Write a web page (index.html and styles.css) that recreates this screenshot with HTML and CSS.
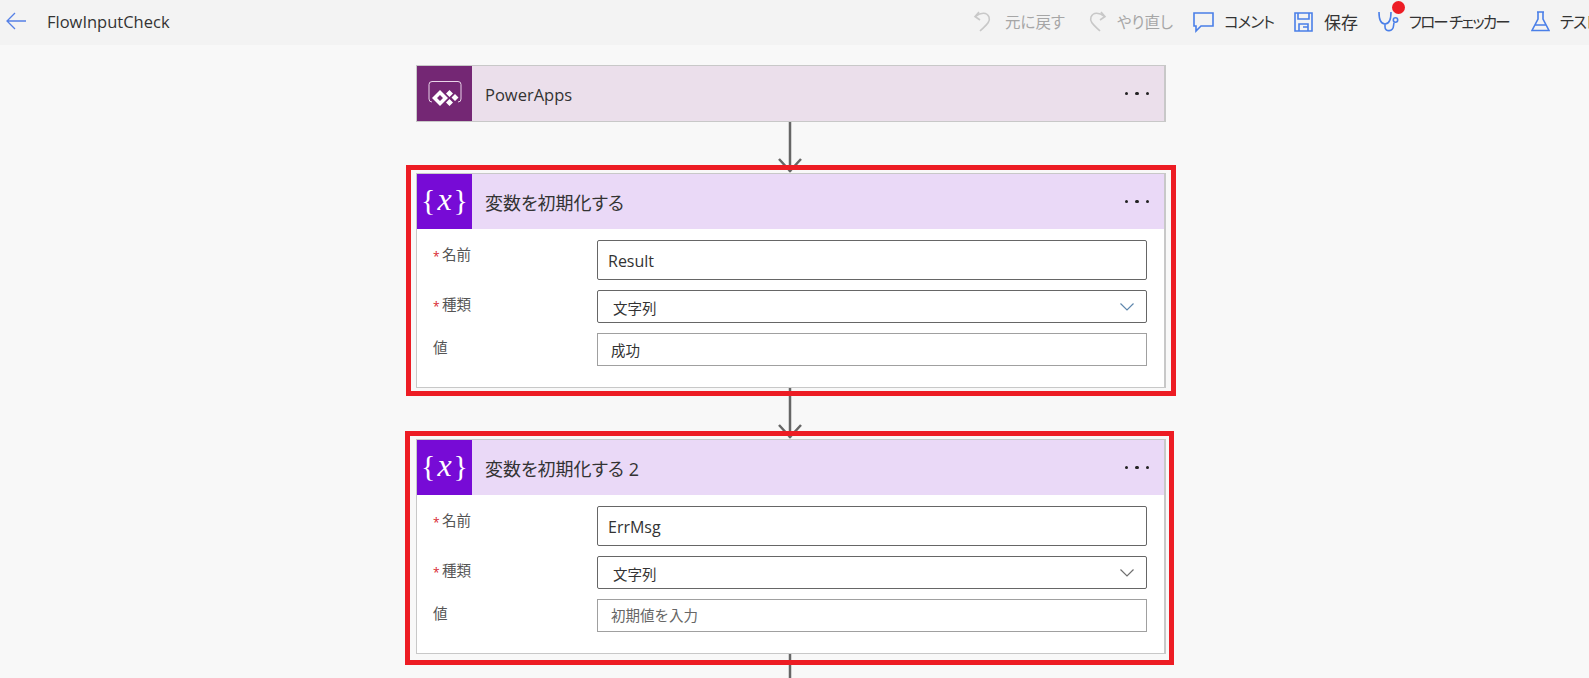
FILE: index.html
```html
<!DOCTYPE html>
<html lang="ja">
<head>
<meta charset="UTF-8" />
<title>FlowInputCheck</title>
<link rel="stylesheet" href="styles.css">
</head>
<body>
<header class="topbar">
  <svg class="back" width="20" height="18" viewBox="0 0 20 18"><path d="M9 1 1 9l8 8M1 9h19"/></svg>
  <span class="flow-name">FlowInputCheck</span>
  <nav class="tools">
    <div class="tool disabled undo">
      <svg width="20" height="24" viewBox="0 0 20 24"><path d="M6 3 2 7.500 7 11M2.500 7.500C8 3 14 3 16 8c2 5-4 9-9 14"/></svg>
      <span>元に戻す</span>
    </div>
    <div class="tool disabled redo">
      <svg class="flip" width="20" height="24" viewBox="0 0 20 24"><path d="M6 3 2 7.500 7 11M2.500 7.500C8 3 14 3 16 8c2 5-4 9-9 14"/></svg>
      <span>やり直し</span>
    </div>
    <div class="tool comment">
      <svg width="21" height="24" viewBox="0 0 21 24"><path d="M1 4h19v13H8l-5 5v-5H1z"/></svg>
      <span class="kana">コメント</span>
    </div>
    <div class="tool save">
      <svg width="19" height="24" viewBox="0 0 19 24"><path d="M1 4h17v18H1zM4 4v6h11V4M5 22v-7h9v7M9 18h5"/></svg>
      <span class="save-label">保存</span>
    </div>
    <div class="tool checker">
      <svg width="22" height="24" viewBox="0 0 22 24"><path d="M1 3c0 8 2 12 6 12s6-4 6-12M7 15v3c0 5 8 5 8.500-1l.5-3.500"/><circle cx="17.500" cy="11" r="2.200"/></svg>
      <span class="kana tight">フロー チェッカー</span>
      <i class="alert-dot"></i>
    </div>
    <div class="tool test">
      <svg width="19" height="24" viewBox="0 0 19 24"><path d="M6 3h7M7 3v7L1 21.500h17L12 10V3M4 16h11"/></svg>
      <span class="kana">テスト</span>
    </div>
  </nav>
</header>

<main class="canvas">
  <section class="card trigger">
    <div class="card-head">
      <div class="card-icon">
        <svg width="55" height="55" viewBox="0 0 55 55">
          <path class="pa-frame" d="M12 33V18.500a3 3 0 0 1 3-3h26a3 3 0 0 1 3 3V33a3 3 0 0 1-3 3M15 36a3 3 0 0 1-3-3"/>
          <path class="pa-mark" fill-rule="evenodd" d="M23 24l8 8-8 8-8-8zM23 29l-3 3 3 3 3-3z"/>
          <path class="pa-mark" d="M32.500 24l3.500 3.500-3.500 3.500-3.500-3.500zM38 28l3.500 3.500-3.500 3.500-3.500-3.500zM32.500 33l3.500 3.500-3.500 3.500-3.500-3.500z"/>
        </svg>
      </div>
      <h2>PowerApps</h2>
      <div class="more"><i></i><i></i><i></i></div>
    </div>
  </section>

  <svg class="arrow" width="24" height="51" viewBox="0 0 24 51"><path d="M12 0v50M1 37l11 12 11-12"/></svg>

  <section class="card action frame-one">
    <div class="card-head">
      <div class="card-icon var-icon">{<i>x</i>}</div>
      <h2>変数を初期化する</h2>
      <div class="more"><i></i><i></i><i></i></div>
    </div>
    <div class="card-body">
      <label class="required">名前</label>
      <input class="field tall" type="text" value="Result">
      <label class="required">種類</label>
      <div class="field select"><span>文字列</span><svg width="14" height="8" viewBox="0 0 14 8"><path d="M0.500 0.500 7 7l6.500-6.500"/></svg></div>
      <label>値</label>
      <input class="field plain" type="text" value="成功">
    </div>
  </section>

  <svg class="arrow" width="24" height="51" viewBox="0 0 24 51"><path d="M12 0v50M1 37l11 12 11-12"/></svg>

  <section class="card action frame-two">
    <div class="card-head">
      <div class="card-icon var-icon">{<i>x</i>}</div>
      <h2>変数を初期化する 2</h2>
      <div class="more"><i></i><i></i><i></i></div>
    </div>
    <div class="card-body">
      <label class="required">名前</label>
      <input class="field tall" type="text" value="ErrMsg">
      <label class="required">種類</label>
      <div class="field select grey"><span>文字列</span><svg width="14" height="8" viewBox="0 0 14 8"><path d="M0.500 0.500 7 7l6.500-6.500"/></svg></div>
      <label>値</label>
      <input class="field plain" type="text" placeholder="初期値を入力">
    </div>
  </section>

  <svg class="arrow" width="24" height="51" viewBox="0 0 24 51"><path d="M12 0v50"/></svg>
</main>
</body>
</html>
```

FILE: styles.css
```css
* {
  box-sizing: border-box;
  margin: 0;
  padding: 0;
  font-family: "Open Sans", "Noto Sans CJK JP", sans-serif;
}

body {
  width: 1589px;
  height: 678px;
  overflow: hidden;
  background: #f8f8f8;
  color: #333;
}

/* top bar */
.topbar {
  display: flex;
  align-items: center;
  height: 45px;
  padding-left: 6px;
  background: #f3f3f3;
  white-space: nowrap;
}

.back {
  flex: none;
  margin-top: -3px;
}

.back path {
  fill: none;
  stroke: #5580e6;
  stroke-width: 1.3;
}

.flow-name {
  flex: none;
  width: 926px;
  margin-left: 21px;
  margin-top: -2px;
  font-size: 16.500px;
  color: #333;
}

.tools {
  display: flex;
  flex: none;
  align-items: center;
  margin-top: -3px;
}

.tool {
  position: relative;
  display: flex;
  flex: none;
  align-items: center;
  gap: 12px;
  font-size: 15.500px;
  font-feature-settings: "palt";
  color: #333;
}

.tool svg {
  flex: none;
  fill: none;
  stroke: #4a7fe8;
  stroke-width: 1.600;
}

.tool.disabled {
  color: #a6a6a6;
}

.tool.disabled svg {
  stroke: #c8c8c8;
}

.flip {
  transform: scaleX(-1);
}

.kana {
  letter-spacing: -1px;
}

.kana.tight {
  letter-spacing: -1.800px;
}

.save-label {
  font-size: 17px;
}

.redo { margin-left: 22px; gap: 10px; }
.comment { margin-left: 20px; gap: 10px; }
.save { margin-left: 20px; gap: 11px; }
.checker { margin-left: 20px; gap: 9px; }
.test { margin-left: 22px; gap: 10px; }

.alert-dot {
  position: absolute;
  left: 14px;
  top: -8px;
  width: 13px;
  height: 13px;
  border-radius: 50%;
  background: #ed1c24;
}

/* flow canvas */
.canvas {
  display: flex;
  flex-direction: column;
  padding: 20px 0 0 416px;
}

.card {
  position: relative;
  width: 750px;
  flex: none;
  background: #fff;
  border: 1px solid #c8c8c8;
  border-width: 1px 2px 1px 1px;
}

.card-head {
  display: flex;
  align-items: center;
  height: 55px;
}

.trigger .card-head { background: #ebdfeb; }
.action .card-head { background: #ead9f7; }

.card-icon {
  flex: none;
  width: 55px;
  height: 55px;
  color: #fff;
}

.trigger .card-icon { background: #742774; }
.action .card-icon { background: #770bd6; }

.pa-frame {
  fill: none;
  stroke: #e9d4e9;
  stroke-width: 1;
}

.pa-mark {
  fill: #fff;
}

.var-icon {
  display: flex;
  align-items: center;
  justify-content: center;
  padding-bottom: 4px;
  font-family: "Liberation Serif", serif;
  font-size: 30px;
  font-weight: 400;
}

.var-icon i {
  margin: 0 2px;
  font-family: "Liberation Serif", serif;
  font-size: 32px;
  font-style: italic;
}

.card-head h2 {
  flex: 1;
  margin-left: 13px;
  padding-top: 1px;
  font-size: 16.500px;
  font-weight: 400;
  font-feature-settings: "palt";
  color: #333;
}

.action .card-head h2 {
  font-size: 18px;
}

.more {
  display: flex;
  gap: 7px;
  margin-right: 15px;
}

.more i {
  width: 3.500px;
  height: 3.500px;
  border-radius: 50%;
  background: #222;
}

/* form */
.card-body {
  display: grid;
  grid-template-columns: 164px 550px;
  row-gap: 10px;
  padding: 11px 0 21px 16px;
}

.card-body label {
  padding-top: 5px;
  font-size: 14.500px;
  line-height: 20px;
  color: #555;
}

.required::before {
  content: "*";
  display: inline-block;
  width: 9px;
  color: #d8242c;
  font-size: 12px;
  vertical-align: -1px;
}

.field {
  width: 550px;
  height: 33px;
  padding: 0 13px;
  border: 1px solid #a0a0a0;
  background: #fff;
  font-size: 14.500px;
  color: #333;
  outline: none;
}

.field::placeholder {
  color: #666;
  opacity: 1;
}

.tall {
  height: 40px;
  padding: 2px 10px 0;
  border-color: #666;
  border-radius: 2px;
  font-size: 16px;
}

.select {
  display: flex;
  align-items: center;
  justify-content: space-between;
  padding: 1px 12px 0 15px;
  border-color: #666;
  border-radius: 2px;
}

.select svg {
  fill: none;
  stroke: #5f87ad;
  stroke-width: 1.200;
}

.select.grey svg {
  stroke: #707070;
}

/* connectors */
.arrow {
  flex: none;
  margin-left: 362px;
}

.arrow path {
  fill: none;
  stroke: #666;
  stroke-width: 2.500;
}

/* red annotation boxes */
.frame-one::after,
.frame-two::after {
  content: "";
  position: absolute;
  border: 5px solid #ed1c24;
  z-index: 1;
}

.frame-one::after {
  inset: -9px -12px -9px -11px;
}

.frame-two::after {
  inset: -9px -10px -12px -12px;
}
```
